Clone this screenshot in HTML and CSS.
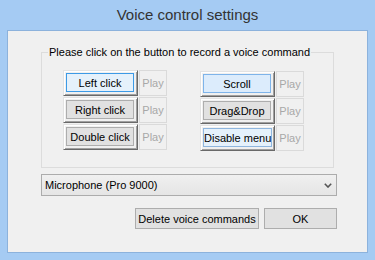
FILE: index.html
```html
<!DOCTYPE html>
<html lang="en">
<head>
    <meta charset="UTF-8">
    <title>Voice control settings</title>
    <link rel="stylesheet" href="styles.css">
</head>
<body>
    <div class="window">
        <div class="titlebar">Voice control settings</div>

        <div class="client">
            <fieldset class="group">
                <legend>Please click on the button to record a voice command</legend>

                <div class="cmds">
                    <div class="col">
                        <div class="row">
                            <button class="rec"><span class="face focus">Left click</span></button>
                            <button class="play" disabled>Play</button>
                        </div>
                        <div class="row">
                            <button class="rec"><span class="face">Right click</span></button>
                            <button class="play" disabled>Play</button>
                        </div>
                        <div class="row">
                            <button class="rec"><span class="face">Double click</span></button>
                            <button class="play" disabled>Play</button>
                        </div>
                    </div>

                    <div class="col col-right">
                        <div class="row">
                            <button class="rec"><span class="face hot">Scroll</span></button>
                            <button class="play" disabled>Play</button>
                        </div>
                        <div class="row">
                            <button class="rec"><span class="face">Drag&amp;Drop</span></button>
                            <button class="play" disabled>Play</button>
                        </div>
                        <div class="row">
                            <button class="rec"><span class="face focus-soft">Disable menu</span></button>
                            <button class="play" disabled>Play</button>
                        </div>
                    </div>
                </div>
            </fieldset>

            <div class="combo">
                <span>Microphone (Pro 9000)</span>
                <svg width="8" height="5" viewBox="0 0 8 5">
                    <polyline points="0.8,0.8 4,4 7.2,0.8" fill="none" stroke="#555" stroke-width="1.6"/>
                </svg>
            </div>

            <div class="actions">
                <button class="btn btn-delete">Delete voice commands</button>
                <button class="btn btn-ok">OK</button>
            </div>
        </div>
    </div>
</body>
</html>
```

FILE: styles.css
```css
* {
    margin: 0;
    padding: 0;
    box-sizing: border-box;
}

body {
    font-family: 'Liberation Sans', Arial, sans-serif;
    font-size: 11px;
    color: #000;
    background-color: #a5cbf3;
}

.window {
    width: 375px;
    height: 260px;
    background-color: #a5cbf3;
}

/* title bar */
.titlebar {
    height: 30px;
    line-height: 30px;
    text-align: center;
    font-size: 15px;
    color: #333;
}

/* client area */
.client {
    margin: 0 7px;
    height: 223px;
    border: 1px solid #8cb2dc;
    background-color: #f0f0f0;
    padding-left: 33px;
}

.group {
    width: 293px;
    height: 123px;
    margin-top: 14px;
    border: 1px solid #dcdcdc;
    padding: 11px 0 0 0;
    min-width: 0;
}

.group legend {
    margin-left: 6px;
    padding: 0 1px;
    line-height: 14px;
    font-size: 11px;
}

.cmds {
    display: flex;
    gap: 33px;
    padding-left: 21px;
}

.col {
    display: flex;
    flex-direction: column;
    gap: 1px;
}

.col-right {
    margin-top: 1px;
}

.row {
    display: flex;
    gap: 1px;
}

/* record buttons, old 3D style with a themed face inside */
.rec {
    width: 75px;
    height: 26px;
    padding: 2px;
    border: 1px solid;
    border-color: #e3e3e3 #696969 #696969 #e3e3e3;
    box-shadow: inset 1px 1px #fff, inset -1px -1px #a0a0a0;
    background-color: #f0f0f0;
    font-family: inherit;
    font-size: 11px;
    display: flex;
}

.face {
    flex: 1;
    display: flex;
    align-items: center;
    justify-content: center;
    border: 1px solid #adadad;
    background-color: #e1e1e1;
    white-space: nowrap;
    margin-right: 1px;
    margin-bottom: 1px;
}

.face.focus {
    border-color: #3c9ae6;
    background-color: #e5f1fb;
}

.face.hot {
    border-color: #7eb4ea;
    background-color: #dcecfc;
}

.face.focus-soft {
    border-color: #8fb6de;
    background-color: #e5f1fb;
}

.play {
    width: 28px;
    height: 26px;
    border: 1px solid #dadada;
    background-color: #f0f0f0;
    color: #a8a8a8;
    font-family: inherit;
    font-size: 11px;
    overflow: hidden;
    white-space: nowrap;
}

/* microphone dropdown */
.combo {
    width: 296px;
    height: 22px;
    margin-top: 6px;
    border: 1px solid #acacac;
    background: linear-gradient(#f0f0f0, #e5e5e5);
    display: flex;
    align-items: center;
    justify-content: space-between;
    padding: 0 4px 0 3px;
}

/* bottom buttons */
.actions {
    width: 296px;
    margin-top: 12px;
    display: flex;
    justify-content: flex-end;
    gap: 5px;
}

.btn {
    height: 21px;
    border: 1px solid #adadad;
    background-color: #e1e1e1;
    font-family: inherit;
    font-size: 11px;
    color: #000;
}

.btn-delete {
    width: 124px;
}

.btn-ok {
    width: 73px;
}
```
